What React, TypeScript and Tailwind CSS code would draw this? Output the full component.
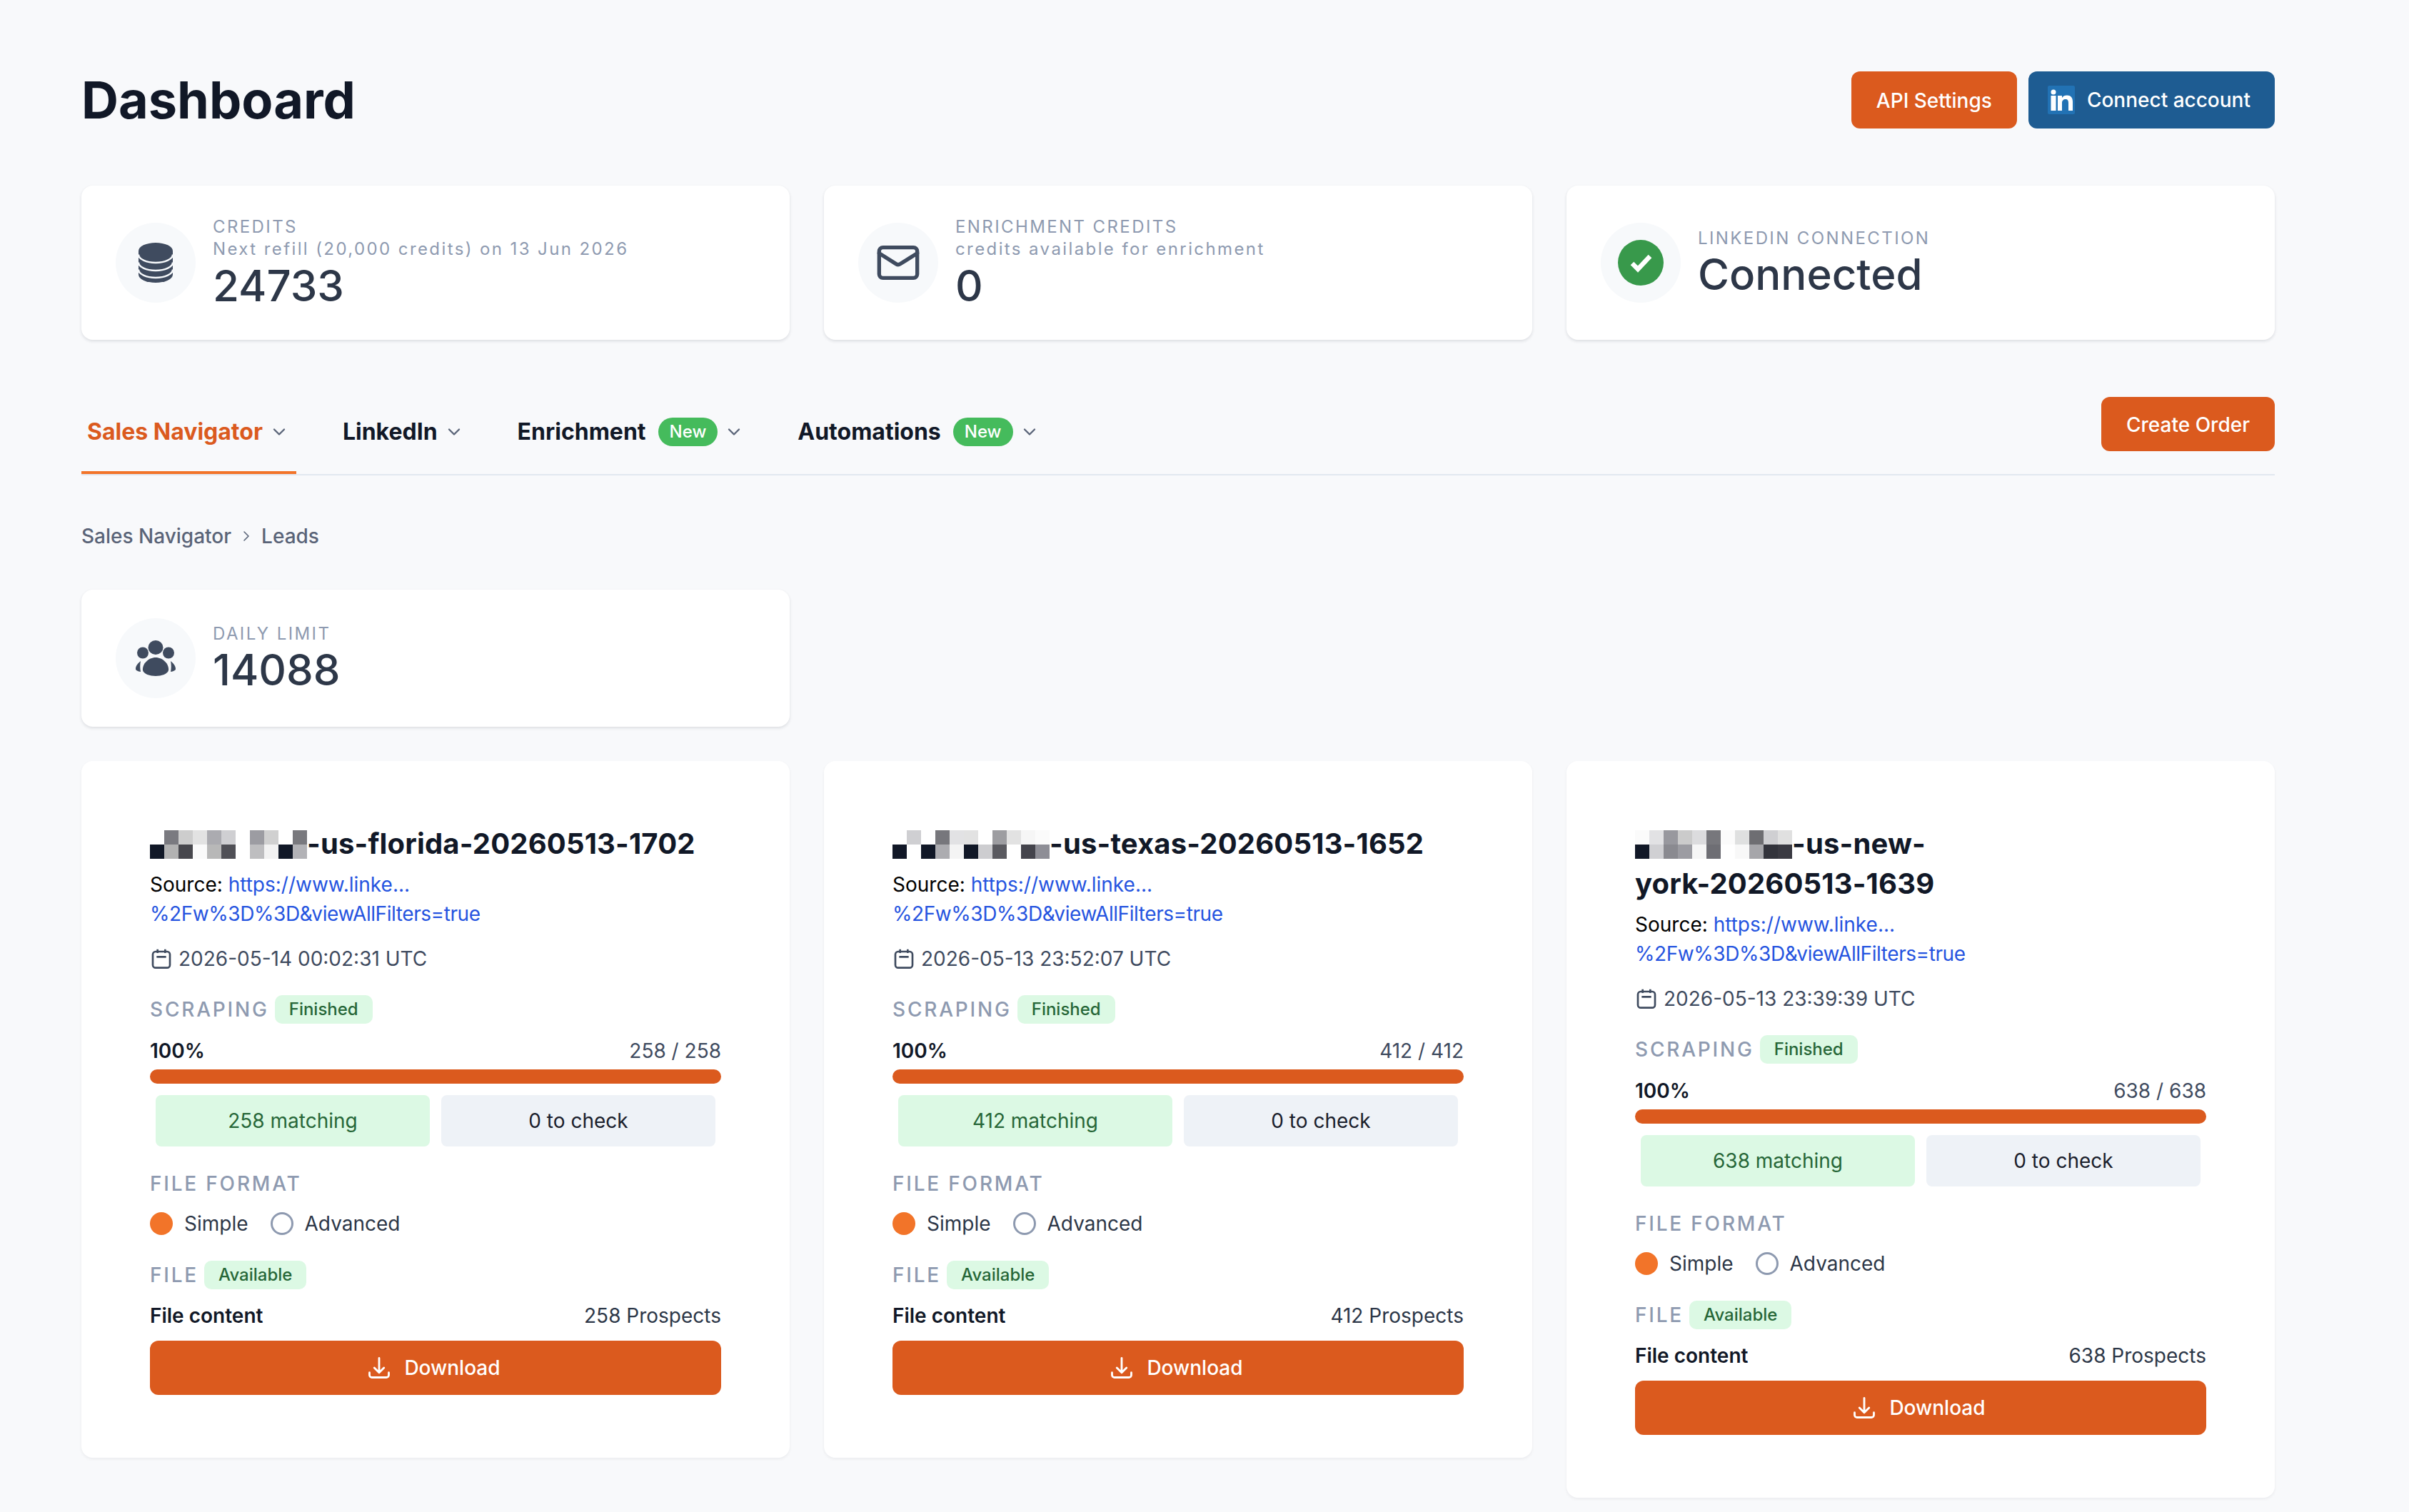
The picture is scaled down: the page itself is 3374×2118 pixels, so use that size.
import { LuChevronDown, LuChevronRight, LuMail } from "react-icons/lu";

const jobs = [
	{
		top: ["bg-[#ffffff]", "bg-[#7a7a80]", "bg-[#cdcdcd]", "bg-[#e2e2e2]", "bg-[#ababb0]", "bg-[#cfcfd2]", "bg-[#ffffff]", "bg-[#9c9ca2]", "bg-[#d0d0d0]", "bg-[#ffffff]", "bg-[#79797e]"],
		bottom: ["bg-[#111827]", "bg-[#b2b2b2]", "bg-[#47474d]", "bg-[#fafafa]", "bg-[#b8b8b8]", "bg-[#505056]", "bg-[#ffffff]", "bg-[#bebec0]", "bg-[#f2f2f2]", "bg-[#111827]", "bg-[#b2b2b6]"],
		name: "-us-florida-20260513-1702",
		date: "2026-05-14 00:02:31 UTC",
		count: 258,
	},
	{
		top: ["bg-[#ffffff]", "bg-[#cfcfd2]", "bg-[#ffffff]", "bg-[#77777c]", "bg-[#e2e2e4]", "bg-[#e2e2e2]", "bg-[#ffffff]", "bg-[#9d9da1]", "bg-[#e2e2e2]", "bg-[#f6f6f6]", "bg-[#fbfbfb]"],
		bottom: ["bg-[#111827]", "bg-[#ffffff]", "bg-[#111827]", "bg-[#acacb0]", "bg-[#f4f4f4]", "bg-[#111827]", "bg-[#cdcdd0]", "bg-[#5a5a60]", "bg-[#ffffff]", "bg-[#44444c]", "bg-[#8e8e96]"],
		name: "-us-texas-20260513-1652",
		date: "2026-05-13 23:52:07 UTC",
		count: 412,
	},
	{
		top: ["bg-[#fbfbfb]", "bg-[#e2e2e4]", "bg-[#98989e]", "bg-[#cbcbcb]", "bg-[#dcdcde]", "bg-[#77777c]", "bg-[#fbfbfb]", "bg-[#dfe0e0]", "bg-[#6e6e72]", "bg-[#cfcfd2]", "bg-[#e0e0e0]"],
		bottom: ["bg-[#111827]", "bg-[#d0d0d3]", "bg-[#8a8a90]", "bg-[#9c9ca2]", "bg-[#f6f6f6]", "bg-[#6e6e74]", "bg-[#ffffff]", "bg-[#f8f8f8]", "bg-[#a6a6aa]", "bg-[#33343c]", "bg-[#3a3a42]"],
		name: "-us-new-\nyork-20260513-1639",
		date: "2026-05-13 23:39:39 UTC",
		count: 638,
	},
];

const tabs = [
	{ label: "Sales Navigator", active: true, isNew: false },
	{ label: "LinkedIn", active: false, isNew: false },
	{ label: "Enrichment", active: false, isNew: true },
	{ label: "Automations", active: false, isNew: true },
];

function DatabaseIcon() {
	return (
		<svg viewBox="0 0 48 56" className="h-[56px] w-[48px]">
			<path d="M0 11.5A24 11.5 0 0 1 48 11.5V44.5A24 11.5 0 0 1 0 44.5Z" fill="#3f4b5f" />
			<path d="M0 16.5A24 11.5 0 0 0 48 16.5M0 27.5A24 11.5 0 0 0 48 27.5M0 37.5A24 11.5 0 0 0 48 37.5" fill="none" stroke="#f7f9fb" strokeWidth="2.5" />
		</svg>
	);
}

function CheckIcon() {
	return (
		<svg viewBox="0 0 64 64" className="h-[64px] w-[64px]">
			<circle cx="32" cy="32" r="32" fill="#38994b" />
			<path d="M20 33L28 41L45 23" fill="none" stroke="#fff" strokeWidth="6.5" />
		</svg>
	);
}

function UsersIcon() {
	return (
		<svg viewBox="0 0 56 50" className="h-[50px] w-[56px]" fill="#3f4b5f">
			<ellipse cx="28" cy="10" rx="10.5" ry="10" />
			<circle cx="10" cy="17.5" r="8" />
			<circle cx="46" cy="17.5" r="8" />
			<path d="M28 24C38 24 47 33 46 42C45 47 36 50 28 50C20 50 11 47 10 42C9 33 18 24 28 24Z" />
			<path d="M7 29C3 32 0 36 0 40C0 42 3 43.5 7 44C6 39 6 34 7 29Z" />
			<path d="M49 29C53 32 56 36 56 40C56 42 53 43.5 49 44C50 39 50 34 49 29Z" />
		</svg>
	);
}

function LinkedinIcon() {
	return (
		<svg viewBox="0 0 38 40" className="h-[40px] w-[38px]">
			<rect width="38" height="40" rx="2" fill="#2272b4" />
			<circle cx="8" cy="9" r="3.5" fill="#fff" />
			<rect x="4.5" y="14" width="7" height="21" fill="#fff" />
			<path d="M14 14H20V17C21.5 14.5 24 13.5 27 13.5C32 13.5 35 16.5 35 22.5V35H29V24C29 21 28 19 25 19C22 19 20 21 20 24V35H14Z" fill="#fff" />
		</svg>
	);
}

function CalendarIcon() {
	return (
		<svg viewBox="0 0 24 24" className="h-[32px] w-[32px]" fill="none" stroke="currentColor" strokeWidth="2">
			<rect x="3" y="4.5" width="18" height="17" rx="3" />
			<path d="M8 2V6M16 2V6M7 10H17" />
		</svg>
	);
}

function DownloadIcon() {
	return (
		<svg viewBox="0 0 24 24" className="h-[36px] w-[36px]" fill="none" stroke="currentColor" strokeWidth="1.9" strokeLinecap="round" strokeLinejoin="round">
			<path d="M3 16.5v2.25A2.25 2.25 0 005.25 21h13.5A2.25 2.25 0 0021 18.75V16.5M16.5 12L12 16.5m0 0L7.5 12m4.5 4.5V3" />
		</svg>
	);
}

function StatCard({ icon, label, sub, value, className = "" }: { icon: React.ReactNode; label: string; sub?: string; value: string; className?: string }) {
	return (
		<div className={`flex items-center gap-[24px] rounded-[16px] bg-white px-[48px] py-[40px] shadow-[0_2px_4px_rgba(15,23,42,0.12)] ${className}`}>
			<div className="flex h-[112px] w-[112px] shrink-0 items-center justify-center rounded-full bg-[#f7f9fb]">{icon}</div>
			<div>
				<p className="h-[32px] pt-[2px] text-[24px] leading-[32px] tracking-[2.4px] text-[#8e9ab0]">{label}</p>
				{sub && <p className="h-[32px] pt-[1px] text-[24px] leading-[32px] tracking-[2.4px] text-[#8e9ab0]">{sub}</p>}
				<p className="text-[60px] font-medium leading-[72px] text-[#2d3748]">{value}</p>
			</div>
		</div>
	);
}

function Pixelated({ top, bottom }: { top: string[]; bottom: string[] }) {
	return (
		<span className="inline-grid h-[40px] w-[220px] grid-cols-11 align-[13px]">
			{top.map((c, i) => (
				<span key={"t" + i} className={c} />
			))}
			{bottom.map((c, i) => (
				<span key={"b" + i} className={c} />
			))}
		</span>
	);
}

function SectionLabel({ children }: { children: React.ReactNode }) {
	return <span className="text-[28px] font-medium leading-[40px] tracking-[2.8px] text-[#8e9ab0]">{children}</span>;
}

function Badge({ children }: { children: React.ReactNode }) {
	return <span className="rounded-[10px] bg-[#dcf9e4] px-[20px] text-[24px] font-medium leading-[40px] text-[#276738]">{children}</span>;
}

function JobCard({ job }: { job: (typeof jobs)[number] }) {
	return (
		<div className="rounded-[16px] bg-white px-[96px] py-[88px] shadow-[0_2px_4px_rgba(15,23,42,0.06)]">
			<h2 className="whitespace-pre-line text-[40px] font-bold leading-[56px] tracking-[0.17px] text-[#111827]">
				<Pixelated top={job.top} bottom={job.bottom} />
				{job.name}
			</h2>
			<p className="mt-[9px] text-[28px] leading-[41px] text-black">
				Source: <span className="text-[#2554e0]">https://www.linke...</span>
				<br />
				<span className="tracking-[-0.43px] text-[#2554e0]">%2Fw%3D%3D&viewAllFilters=true</span>
			</p>
			<div className="mt-[22px] flex h-[40px] items-center gap-[8px] text-[28px] text-[#3f4b5f]">
				<CalendarIcon />
				{job.date}
			</div>
			<div className="mt-[31px] flex items-center gap-[8px]">
				<SectionLabel>SCRAPING</SectionLabel>
				<Badge>Finished</Badge>
			</div>
			<div className="mt-[18px] flex justify-between text-[28px] leading-[40px]">
				<span className="font-semibold text-[#111827]">100%</span>
				<span className="text-[#3f4b5f]">
					{job.count} / {job.count}
				</span>
			</div>
			<div className="mt-[6px] h-[20px] rounded-full bg-[#db5a1e]" />
			<div className="mx-[8px] mt-[16px] grid grid-cols-2 gap-[16px] text-center text-[28px] leading-[72px]">
				<div className="rounded-[8px] bg-[#dcf9e4] text-[#276738]">{job.count} matching</div>
				<div className="rounded-[8px] bg-[#eef2f7] text-[#1a202c]">0 to check</div>
			</div>
			<div className="mt-[32px] h-[40px]">
				<SectionLabel>FILE FORMAT</SectionLabel>
			</div>
			<div className="mt-[20px] flex h-[32px] items-center text-[28px] text-[#2d3748]">
				<span className="h-[32px] w-[32px] rounded-full bg-[#f27429]" />
				<span className="ml-[16px]">Simple</span>
				<span className="ml-[31px] h-[32px] w-[32px] rounded-full border-[3px] border-[#8e9ab0]" />
				<span className="ml-[16px]">Advanced</span>
			</div>
			<div className="mt-[36px] flex items-center gap-[8px]">
				<SectionLabel>FILE</SectionLabel>
				<Badge>Available</Badge>
			</div>
			<div className="mt-[17px] flex justify-between text-[28px] leading-[40px]">
				<span className="font-semibold text-[#111827]">File content</span>
				<span className="text-[#2d3748]">{job.count} Prospects</span>
			</div>
			<button className="mt-[15px] flex h-[76px] w-full items-center justify-center gap-[17px] rounded-[12px] bg-[#db5a1e] pr-[6px] text-[28px] font-medium text-white">
				<DownloadIcon />
				Download
			</button>
		</div>
	);
}

export default function App() {
	return (
		<div className="min-h-[2118px] bg-[#f8f9fb] pl-[114px] [font-family:Inter,sans-serif]">
			<div className="w-[3072px] pt-[100px]">
				<div className="flex items-center justify-between">
					<h1 className="text-[72px] font-bold leading-[80px] text-[#111827]">Dashboard</h1>
					<div className="flex gap-[16px]">
						<button className="h-[80px] rounded-[12px] bg-[#db5a1e] px-[35px] pt-[2px] text-[28px] font-medium text-white">API Settings</button>
						<button className="flex h-[80px] items-center gap-[17px] rounded-[12px] bg-[#1e5c92] pl-[27px] pr-[34px] text-[28px] font-medium text-white">
							<LinkedinIcon />
							Connect account
						</button>
					</div>
				</div>

				<div className="mt-[80px] grid grid-cols-3 gap-[48px]">
					<StatCard icon={<DatabaseIcon />} label="CREDITS" sub="Next refill (20,000 credits) on 13 Jun 2026" value="24733" />
					<StatCard icon={<LuMail className="h-[64px] w-[64px] text-[#3f4b5f]" />} label="ENRICHMENT CREDITS" sub="credits available for enrichment" value="0" />
					<StatCard icon={<CheckIcon />} label="LINKEDIN CONNECTION" value="Connected" />
				</div>

				<div className="mt-[70px] flex h-[120px] items-end justify-between border-b-2 border-[#e2e8f0]">
					<div className="flex h-[118px] gap-[57px]">
						{tabs.map((t) => (
							<div key={t.label} className={`flex items-center gap-[9px] border-b-4 pl-[8px] pr-[10px] pt-[4px] ${t.active ? "border-[#f27429]" : "border-transparent"}`}>
								<span className={`text-[32px] font-bold ${t.active ? "text-[#db5a1e]" : "text-[#111827]"}`}>{t.label}</span>
								{t.isNew && <span className="ml-[8px] rounded-full bg-[#45bb5c] px-[16px] text-[24px] font-medium leading-[40px] text-white">New</span>}
								<LuChevronDown className="h-[28px] w-[28px] text-[#5a6478]" strokeWidth={2} />
							</div>
						))}
					</div>
					<button className="mb-[32px] h-[76px] rounded-[12px] bg-[#db5a1e] px-[35px] pt-[2px] text-[28px] font-medium text-white">Create Order</button>
				</div>

				<div className="mt-[65px] flex items-center gap-[9px] text-[28px] font-medium leading-[40px] text-[#5a6478]">
					<span>Sales Navigator</span>
					<LuChevronRight className="h-[24px] w-[24px]" strokeWidth={1.6} />
					<span>Leads</span>
				</div>

				<StatCard className="mt-[55px] w-[992px]" icon={<UsersIcon />} label="DAILY LIMIT" value="14088" />

				<div className="mt-[48px] grid grid-cols-3 items-start gap-[48px]">
					{jobs.map((job) => (
						<JobCard key={job.name} job={job} />
					))}
				</div>
			</div>
		</div>
	);
}
